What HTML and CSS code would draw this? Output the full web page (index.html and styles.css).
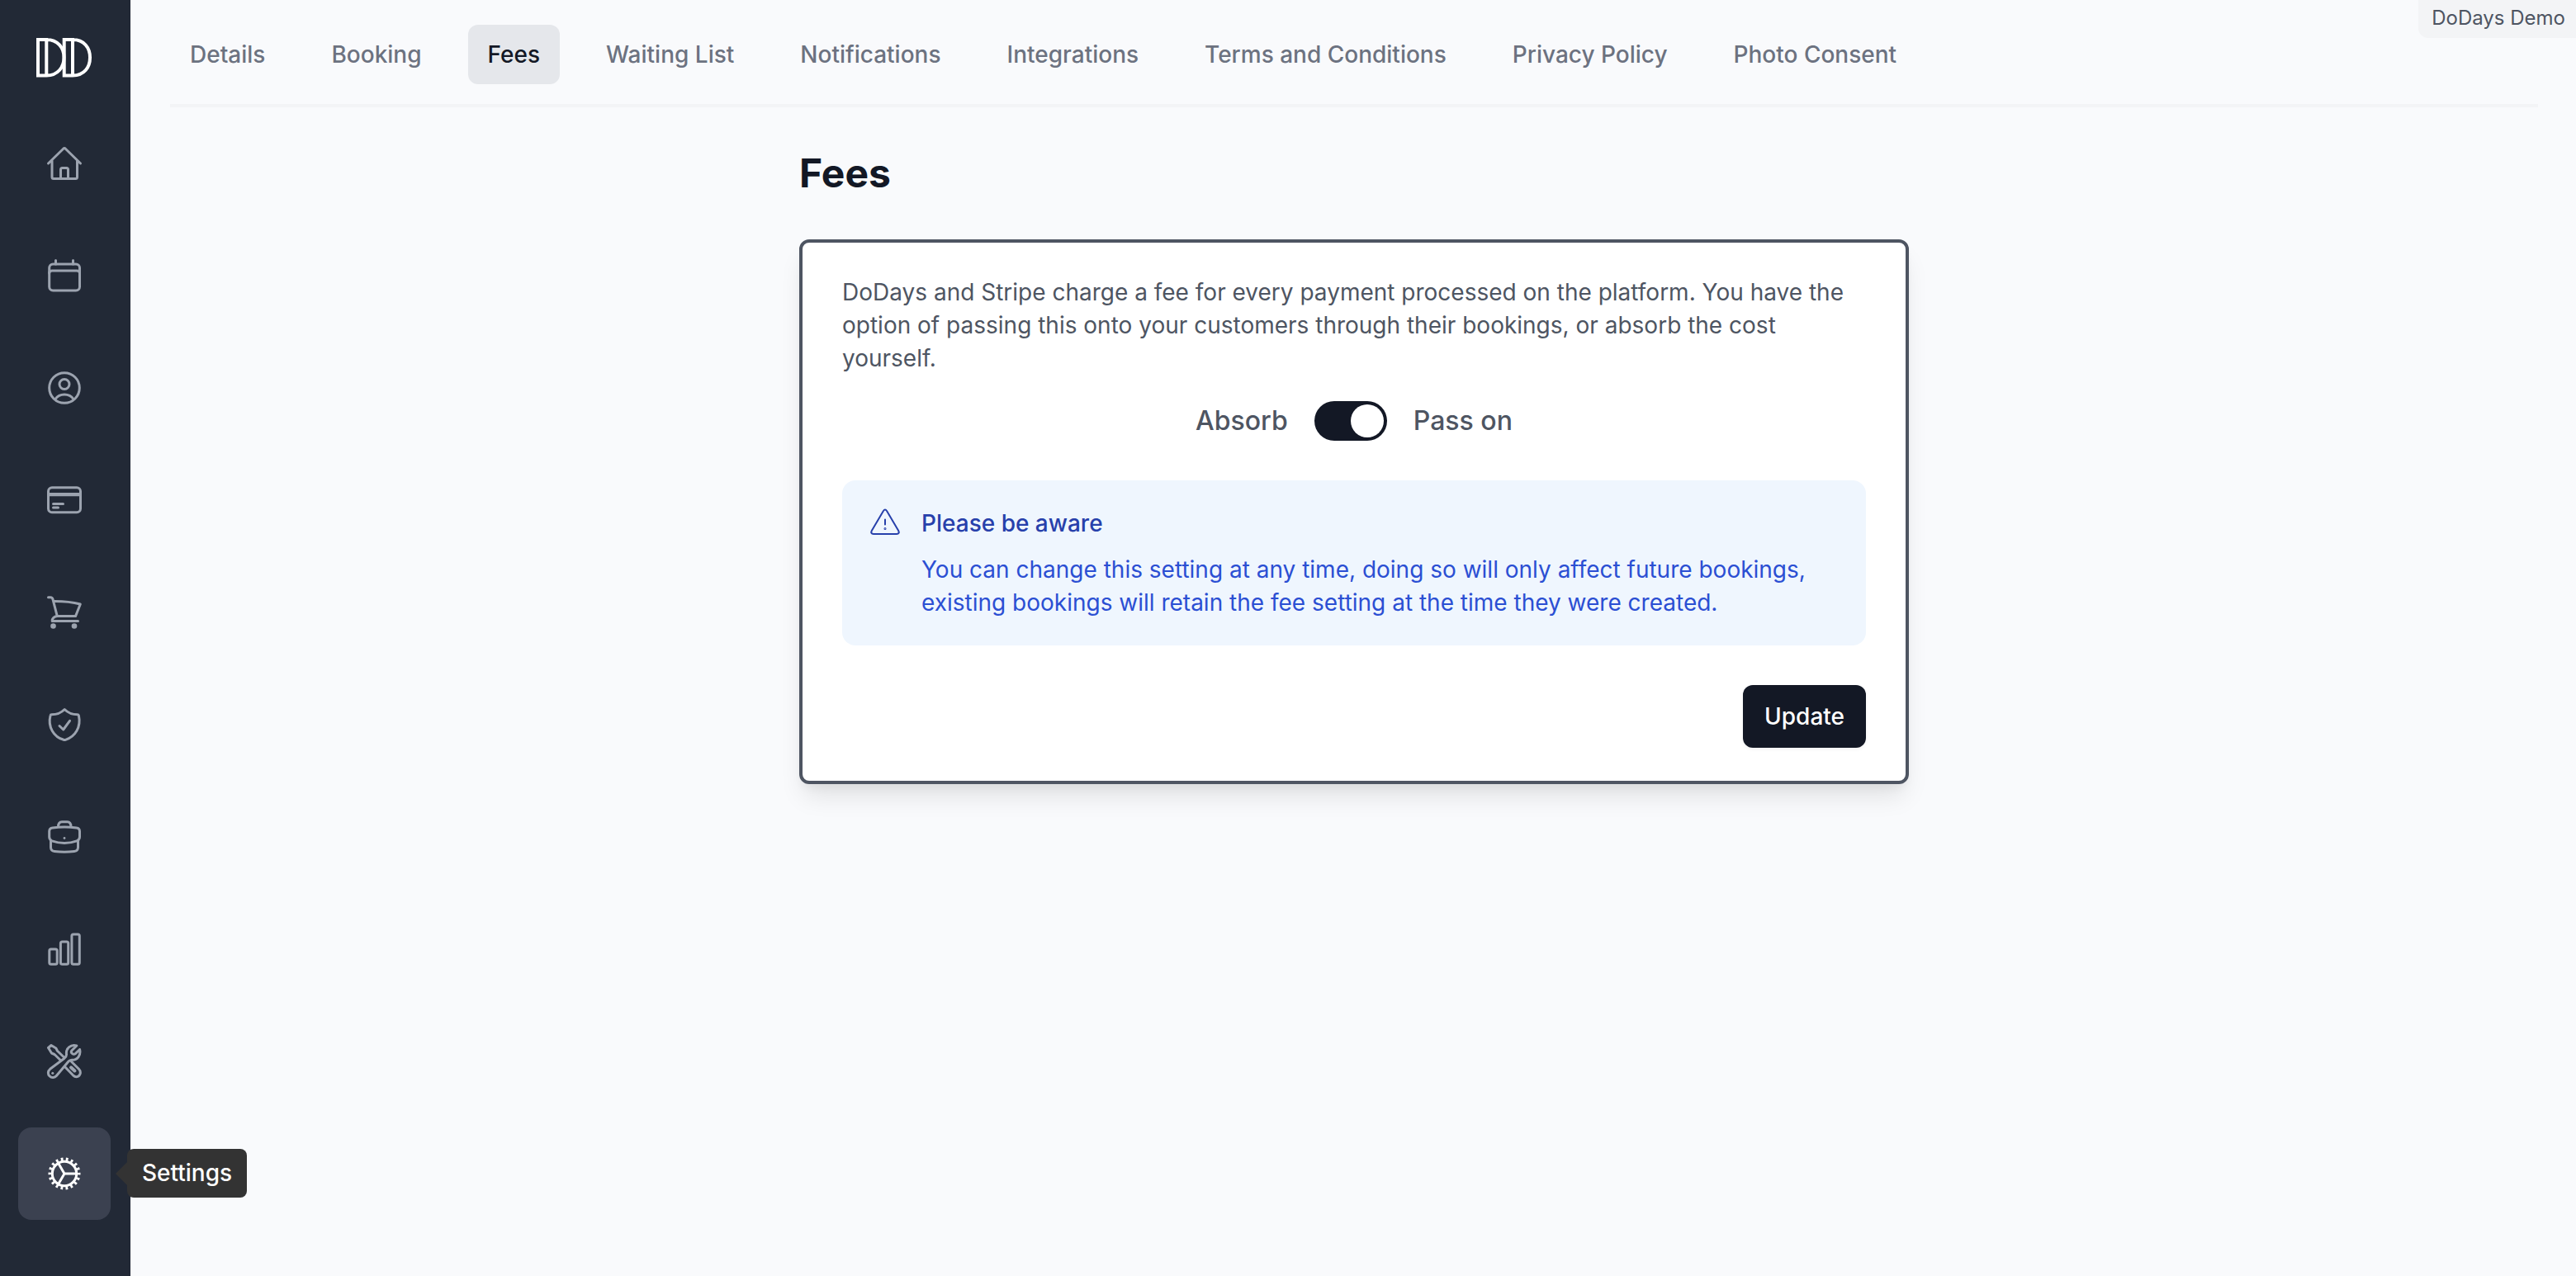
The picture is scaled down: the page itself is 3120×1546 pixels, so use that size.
FILE: index.html
```html
<!DOCTYPE html>
<html lang="en">
<head>
<meta charset="utf-8">
<title>Fees - DoDays</title>
<link rel="stylesheet" href="styles.css">
</head>
<body>
<div class="app">
  <aside class="sidebar">
    <a class="logo" href="#" aria-label="DoDays">
      <svg width="68" height="48" viewBox="0 0 68 48" fill="none" stroke="currentColor" stroke-width="4">
        <path d="M2 2H12.300V45.500H2ZM12.300 2C26 2 33.500 12 33.500 23.700S26 45.500 12.300 45.500"/>
        <path d="M33.700 2H44V45.500H33.700ZM44 2C58 2 65 12 65 23.700S58 45.500 44 45.500"/>
      </svg>
    </a>
    <nav class="menu" aria-label="Main">
      <a class="menu-item" href="#" aria-label="Home">
        <svg class="icon" viewBox="0 0 48 48"><path d="M4.500 24 22.700 6.200Q24 5 25.300 6.200L43.500 24M9 20.500V40.500Q9 42.500 11 42.500H37.500Q39.500 42.500 39.500 40.500V20.500M19.500 42V31.500Q19.500 29.500 21.500 29.500H26.500Q28.500 29.500 28.500 31.500V42"/></svg>
      </a>
      <a class="menu-item" href="#" aria-label="Calendar">
        <svg class="icon" viewBox="0 0 48 48"><rect x="5.700" y="10" width="36.800" height="32" rx="4.500"/><path d="M5.700 21Q5.700 18 9 18H39Q42.500 18 42.500 21M13.500 5.500V10M34.500 5.500V10"/></svg>
      </a>
      <a class="menu-item" href="#" aria-label="Customers">
        <svg class="icon" viewBox="0 0 48 48"><circle cx="24" cy="24" r="18.300"/><circle cx="24" cy="19.500" r="6"/><path d="M13 37.500C18 30 30 30 35 37.500"/></svg>
      </a>
      <a class="menu-item" href="#" aria-label="Payments">
        <svg class="icon" viewBox="0 0 48 48"><rect x="4.500" y="8.800" width="39" height="30" rx="4.500"/><path class="solid" d="M4.500 15H43.500V19.300H4.500Z"/><path d="M10.500 28.500H22.500M10.500 33H16.500"/></svg>
      </a>
      <a class="menu-item" href="#" aria-label="Shop">
        <svg class="icon" viewBox="0 0 48 48"><path d="M4.500 5.800H7Q9.500 5.800 10 8.200L15.300 28.600M11 10.500Q29 10.300 43.300 14L37.500 28.600H15.500Q9.200 29.500 9.200 34.500H40.500"/><circle class="solid" cx="10.500" cy="40.500" r="3.300"/><circle class="solid" cx="36" cy="40.500" r="3.300"/></svg>
      </a>
      <a class="menu-item" href="#" aria-label="Compliance">
        <svg class="icon" viewBox="0 0 48 48"><path d="M24.200 5.500Q18 11.800 8.500 11.800Q7.200 11.800 7 13C3.500 27 11.500 39 23 42.300Q24.200 42.700 25.400 42.300C37 38.500 44.500 27 41.400 13Q41 11.800 39.800 11.800Q30.500 11.800 24.200 5.500ZM18 25.500 22.700 30 30.500 19.300"/></svg>
      </a>
      <a class="menu-item" href="#" aria-label="Staff">
        <svg class="icon" viewBox="0 0 48 48"><path d="M16.500 12Q16.500 5.800 21 5.800H27.500Q32 5.800 32 12M9.700 13Q24 11 38.500 13Q42.500 13.500 42.500 17.300V24Q42.500 27.500 39 28.800Q24 34 9 28.800Q5.700 27.500 5.700 24V17.300Q5.700 13.500 9.700 13ZM7.500 29V36.500Q7.500 41 12 41.500Q24 43 36 41.500Q40.500 41 40.500 36.500V29"/><circle class="solid" cx="24" cy="25.500" r="1.400"/></svg>
      </a>
      <a class="menu-item" href="#" aria-label="Reports">
        <svg class="icon" viewBox="0 0 48 48"><rect x="5.800" y="24" width="9.400" height="18.300" rx="2"/><rect x="19.400" y="15" width="9.300" height="27.300" rx="2"/><rect x="32.900" y="6" width="9.400" height="36.300" rx="2"/></svg>
      </a>
      <a class="menu-item" href="#" aria-label="Tools">
        <svg class="icon" viewBox="0 0 48 48"><path d="M38.800 5C32 2.800 25.500 8 26.500 15.500C26.700 18 25.500 19 24 20.200L6.600 33.300C3.800 35.600 3.700 39.500 6 41.800C8.500 44.300 12.200 44 14.300 41.500L27.500 25.800C29 23.500 30.500 22.500 33 22.300C40 22.500 44.200 16.500 42.600 9.500L37.300 14.600C35 16.500 30.500 13.500 33 10.700Z"/><circle class="solid" cx="9.800" cy="38.200" r="1.500"/><path d="M23 18.500 15.500 11.200 13.800 8 8 4.500 4.500 7.500 8.500 14 12 15.500 19.500 22.800M32.500 24.300 41.500 33.300C45 37 43 42.500 38.500 42.700Q36.500 42.700 34.500 40.800L24.500 30.500"/><path class="heavy" d="M32 31.300 36.500 35.500"/></svg>
      </a>
      <div class="menu-slot">
        <a class="menu-item is-active" href="#" aria-current="page" aria-describedby="tip-settings">
          <svg class="icon" viewBox="0 0 48 48" aria-label="Settings"><circle cx="24" cy="24" r="14.700"/><circle class="teeth" cx="24" cy="24" r="17.500" pathLength="360"/><path d="M38 24H24L16.900 11.700M24 24 16.900 36.300"/></svg>
        </a>
        <span class="tooltip" id="tip-settings" role="tooltip">Settings</span>
      </div>
    </nav>
  </aside>

  <div class="page">
    <div class="account">DoDays Demo</div>
    <nav class="tabs" aria-label="Settings sections">
      <a class="tab" href="#">Details</a>
      <a class="tab" href="#">Booking</a>
      <a class="tab is-active" href="#" aria-current="page">Fees</a>
      <a class="tab" href="#">Waiting List</a>
      <a class="tab" href="#">Notifications</a>
      <a class="tab" href="#">Integrations</a>
      <a class="tab" href="#">Terms and Conditions</a>
      <a class="tab" href="#">Privacy Policy</a>
      <a class="tab" href="#">Photo Consent</a>
    </nav>

    <main class="content">
      <h1 class="title">Fees</h1>
      <form class="card">
        <p class="intro">DoDays and Stripe charge a fee for every payment processed on the platform. You have the option of passing this onto your customers through their bookings, or absorb the cost yourself.</p>
        <div class="switch-row">
          <label for="pass-on">Absorb</label>
          <input class="switch" id="pass-on" type="checkbox" role="switch" checked>
          <label for="pass-on">Pass on</label>
        </div>
        <section class="notice">
          <svg class="notice-icon" viewBox="0 0 40 40"><path d="M17.800 5.200Q20 2 22.200 5.200L36.200 29Q38 32.700 34 33H6Q2 32.700 3.800 29ZM20 15.500V21.500"/><circle cx="20" cy="26.500" r="0.500"/></svg>
          <div class="notice-body">
            <h2 class="notice-title">Please be aware</h2>
            <p class="notice-text">You can change this setting at any time, doing so will only affect future bookings, existing bookings will retain the fee setting at the time they were created.</p>
          </div>
        </section>
        <div class="actions">
          <button class="button" type="button">Update</button>
        </div>
      </form>
    </main>
  </div>
</div>
</body>
</html>
```
FILE: styles.css
```css
* {
  box-sizing: border-box;
}

body {
  margin: 0;
  background: #f9fafc;
  color: #4e5562;
  font-family: Inter, "Liberation Sans", sans-serif;
  font-size: 28px;
  line-height: 40px;
}

h1, h2, p {
  margin: 0;
}

a {
  color: inherit;
  text-decoration: none;
}

.app {
  display: flex;
  min-height: 100vh;
}

/* Sidebar */
.sidebar {
  display: flex;
  flex: none;
  flex-direction: column;
  gap: 48px;
  width: 158px;
  padding: 46px 24px 48px 22px;
  background: #222936;
  color: #9ca3af;
}

.logo {
  display: flex;
  height: 48px;
  padding-left: 22px;
  color: #fff;
}

.menu {
  display: flex;
  flex-direction: column;
  gap: 24px;
}

.menu-slot {
  position: relative;
}

.menu-item {
  display: flex;
  align-items: center;
  justify-content: center;
  height: 112px;
  border-radius: 16px;
}

.menu-item.is-active {
  background: #3b4150;
  color: #fff;
}

.icon {
  width: 48px;
  height: 48px;
  fill: none;
  stroke: currentColor;
  stroke-width: 3;
  stroke-linecap: round;
  stroke-linejoin: round;
}

.icon .solid {
  fill: currentColor;
  stroke: none;
}

.icon .heavy {
  stroke-width: 4;
}

.icon .teeth {
  stroke-width: 4;
  stroke-linecap: butt;
  stroke-dasharray: 9 11;
  stroke-dashoffset: 4;
}

.tooltip {
  position: absolute;
  top: 26px;
  left: 132px;
  padding: 9px 18px 10px;
  border-radius: 8px;
  background: #333;
  color: #fff;
  font-weight: 500;
  white-space: nowrap;
}

.tooltip::before {
  content: "";
  position: absolute;
  top: 16px;
  right: 100%;
  border: 14px solid transparent;
  border-right-color: #333;
  border-left: 0;
}

/* Page */
.page {
  position: relative;
  flex: 1;
  min-width: 0;
  padding: 30px 46px 48px 48px;
}

.account {
  position: absolute;
  top: 0;
  right: 0;
  padding: 2px 13px 4px 16px;
  border-bottom-left-radius: 12px;
  background: #f3f4f6;
  font-size: 24px;
}

.tabs {
  display: flex;
  gap: 32px;
  padding-bottom: 24px;
  border-bottom: 4px solid #f3f4f6;
}

.tab {
  padding: 16px 24px;
  border-radius: 12px;
  color: #6c7280;
  font-weight: 500;
  white-space: nowrap;
}

.tab.is-active {
  background: #e5e7eb;
  color: #131825;
}

.content {
  max-width: 1344px;
  margin: 48px auto 0;
}

.title {
  color: #131825;
  font-size: 48px;
  line-height: 64px;
}

.card {
  margin-top: 48px;
  padding: 40px 48px;
  border: 4px solid #4e5562;
  border-radius: 12px;
  background: #fff;
  box-shadow: 0 20px 30px -6px rgba(0, 0, 0, 0.1), 0 8px 12px -4px rgba(0, 0, 0, 0.05);
}

.switch-row {
  display: flex;
  align-items: center;
  justify-content: center;
  gap: 32px;
  margin: 32px 0 48px;
  font-size: 32px;
  font-weight: 500;
  line-height: 48px;
}

.switch {
  display: flex;
  width: 88px;
  height: 48px;
  margin: 0;
  padding: 4px;
  border-radius: 24px;
  background: #9ca3af;
  appearance: none;
}

.switch::before {
  content: "";
  width: 40px;
  height: 40px;
  border-radius: 50%;
  background: #fff;
}

.switch:checked {
  justify-content: flex-end;
  background: #131825;
}

.notice {
  display: flex;
  gap: 24px;
  padding: 32px;
  border-radius: 16px;
  background: #eff6fe;
  color: #2b4fd3;
}

.notice-icon {
  flex: none;
  width: 40px;
  height: 40px;
  fill: none;
  stroke: #2740ab;
  stroke-width: 2;
  stroke-linecap: round;
  stroke-linejoin: round;
}

.notice-title {
  margin-bottom: 16px;
  color: #2740ab;
  font-size: 28px;
  font-weight: 500;
}

.actions {
  display: flex;
  justify-content: flex-end;
  margin-top: 48px;
}

.button {
  padding: 18px 26px;
  border: 0;
  border-radius: 12px;
  background: #131825;
  box-shadow: 0 2px 4px rgba(0, 0, 0, 0.05);
  color: #fff;
  font: inherit;
  font-weight: 500;
}
```
